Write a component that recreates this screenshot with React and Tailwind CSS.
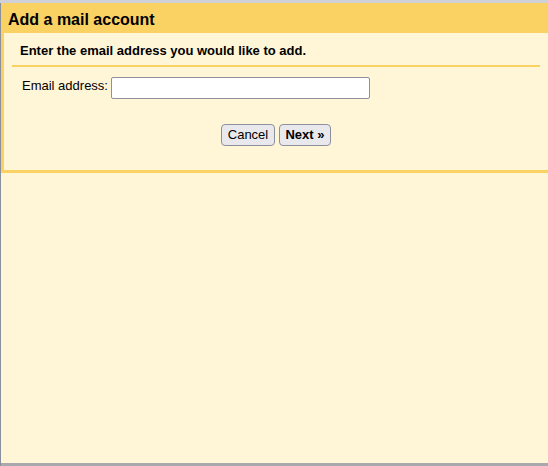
export default function App() {
  return (
    <div className="w-[548px] h-[466px] flex flex-col bg-[#a9a9ad] overflow-hidden font-['Liberation_Sans',Arial,sans-serif] text-black">
      <div className="h-[3px] bg-[#cfd0d8]" />
      <div className="flex flex-1">
        <div className="w-[1px] bg-[#8a8f9c]" />
        <div className="flex-1 flex flex-col bg-[#fff6d7]">
          <div className="h-[30px] bg-[#fad264] flex items-center pl-[7px] pt-[3px]">
            <h1 className="text-[16px] font-bold leading-none">Add a mail account</h1>
          </div>
          <div className="border-l-[3px] border-b-[3px] border-[#fad264] h-[140px] pl-[8px] pr-[4px]">
            <p className="text-[13px] font-bold pt-[10px] pl-[8px] leading-[16px]">
              Enter the email address you would like to add.
            </p>
            <div className="h-[2px] bg-[#fad264] mt-[6px] mr-[4px]" />
            <div className="flex items-start pl-[10px] mt-[10px]">
              <label className="text-[13px] leading-[16px] mt-[1px] mr-[3px]">Email address:</label>
              <input
                type="text"
                className="w-[259px] h-[22px] bg-white border border-[#8f8f9d] rounded-[2px] px-1 text-[13px] outline-none"
              />
            </div>
            <div className="flex justify-center gap-[4px] mt-[25px] mr-[4px]">
              <button className="w-[54px] h-[22px] text-[13px] bg-[#e9e9ed] border border-[#8f8f9d] rounded-[4px]">
                Cancel
              </button>
              <button className="w-[52px] h-[22px] text-[13px] font-bold bg-[#e9e9ed] border border-[#8f8f9d] rounded-[4px]">
                Next »
              </button>
            </div>
          </div>
          <div className="flex-1" />
          <div className="h-[3px] bg-[#a9a9ad]" />
        </div>
      </div>
    </div>
  );
}
